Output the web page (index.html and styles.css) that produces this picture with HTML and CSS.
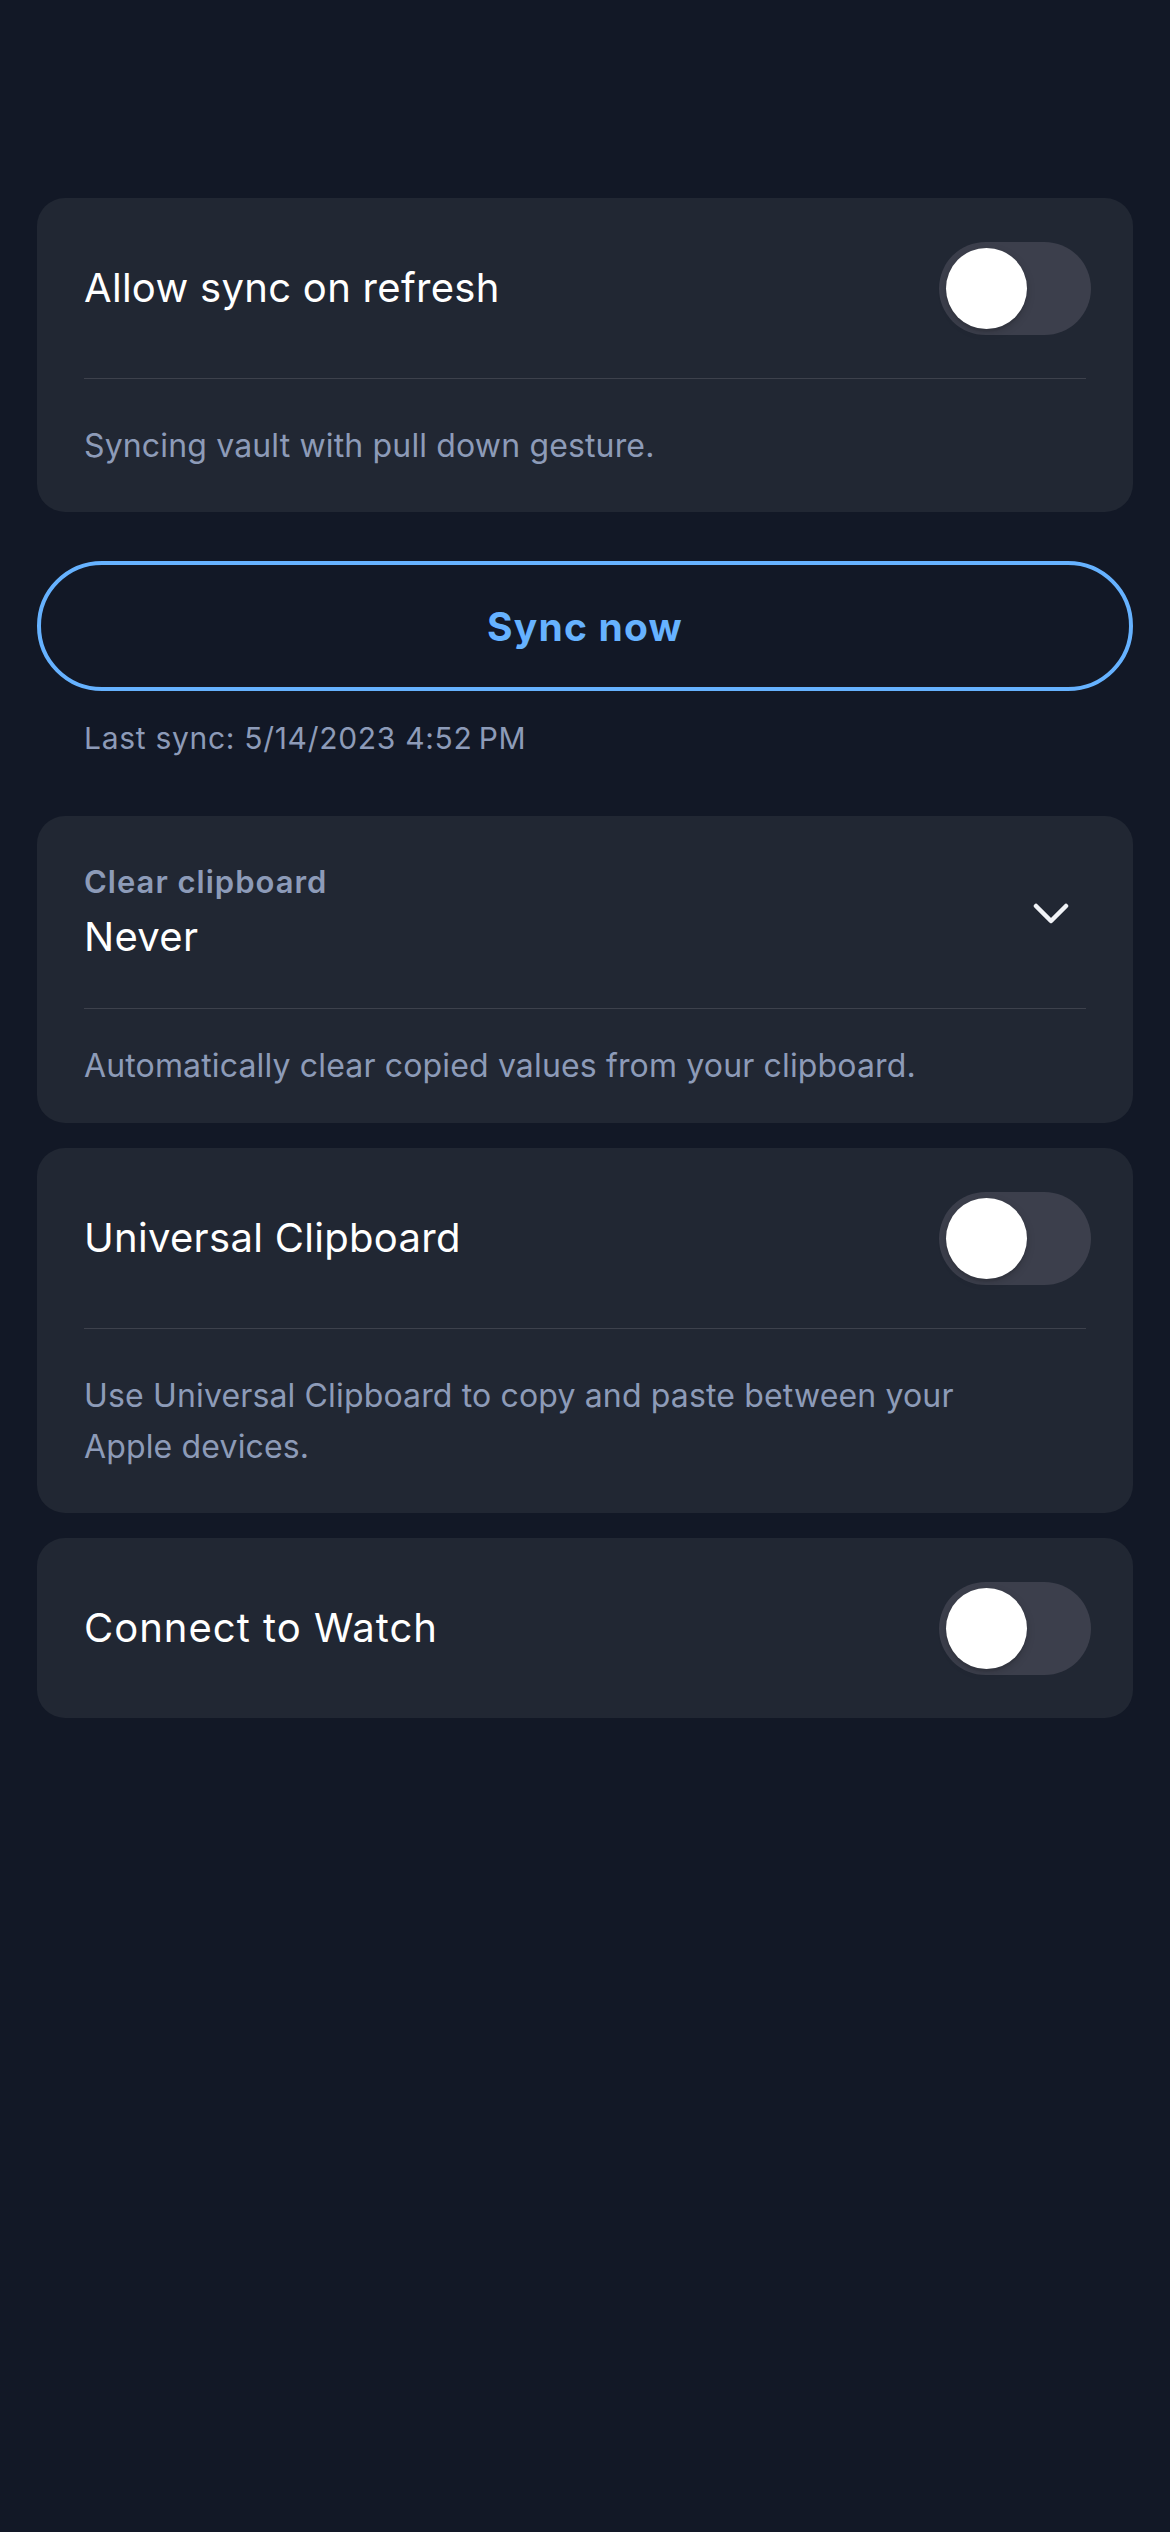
FILE: index.html
```html
<!DOCTYPE html>
<html lang="en">
<head>
<meta charset="utf-8">
<title>Settings</title>
<link rel="stylesheet" href="styles.css">
</head>
<body>
<main class="page">
  <section class="card">
    <div class="row">
      <span class="title">Allow sync on refresh</span>
      <span class="toggle"><span class="knob"></span></span>
    </div>
    <div class="divider"></div>
    <p class="desc">Syncing vault with pull down gesture.</p>
  </section>

  <button class="sync-btn">Sync now</button>
  <p class="last-sync">Last sync: 5/14/2023 4:52&#8239;PM</p>

  <section class="card card-clip">
    <div class="row row-picker">
      <div class="picker-text">
        <span class="picker-label">Clear clipboard</span>
        <span class="picker-value">Never</span>
      </div>
      <svg class="chevron" width="36" height="22" viewBox="0 0 36 22" aria-hidden="true">
        <polyline points="3,3 18,18 33,3" fill="none" stroke="#f1f3f7" stroke-width="4.5" stroke-linecap="round" stroke-linejoin="round"/>
      </svg>
    </div>
    <div class="divider"></div>
    <p class="desc desc-tight">Automatically clear copied values from your clipboard.</p>
  </section>

  <section class="card card-gap">
    <div class="row">
      <span class="title">Universal Clipboard</span>
      <span class="toggle"><span class="knob"></span></span>
    </div>
    <div class="divider"></div>
    <p class="desc desc-wrap">Use Universal Clipboard to copy and paste between your Apple devices.</p>
  </section>

  <section class="card card-gap">
    <div class="row">
      <span class="title title-wide">Connect to Watch</span>
      <span class="toggle"><span class="knob"></span></span>
    </div>
  </section>
</main>
</body>
</html>
```

FILE: styles.css
```css
* { box-sizing: border-box; }

html, body {
  margin: 0;
  padding: 0;
  background: #121826;
}

body {
  font-family: Inter, "Noto Sans", "Liberation Sans", sans-serif;
  color: #ffffff;
  min-height: 2532px;
}

.page {
  padding: 198px 37px 0 37px;
  display: flex;
  flex-direction: column;
}

.card {
  background: #212733;
  border-radius: 28px;
  display: flex;
  flex-direction: column;
}

.card-gap { margin-top: 25px; }

.row {
  height: 180px;
  display: flex;
  align-items: center;
  justify-content: space-between;
  padding: 0 42px 0 47px;
}

.title {
  font-size: 40px;
  line-height: 1.2;
  font-weight: 400;
  letter-spacing: 0.3px;
  color: #ffffff;
}

.title-wide { letter-spacing: 1px; }

.toggle {
  width: 152px;
  height: 93px;
  border-radius: 47px;
  background: #3c3f4c;
  padding: 6px 7px;
  display: flex;
  align-items: center;
  flex-shrink: 0;
}

.knob {
  width: 81px;
  height: 81px;
  border-radius: 50%;
  background: #ffffff;
  box-shadow: 0 3px 8px rgba(0, 0, 0, 0.18), 0 3px 1px rgba(0, 0, 0, 0.06);
}

.divider {
  height: 1px;
  margin: 0 47px;
  background: #3d414c;
}

.desc {
  margin: 0;
  padding: 41px 47px;
  font-size: 32px;
  line-height: 51px;
  color: #8d9bb8;
  letter-spacing: 0.15px;
}

.desc-tight { padding: 31px 47px 32px; }

.desc-wrap { padding-right: 150px; }

.sync-btn {
  margin: 49px 0 0;
  height: 130px;
  border: 4px solid #66b2ff;
  border-radius: 65px;
  background: transparent;
  color: #66b2ff;
  font-family: Inter, "Noto Sans", "Liberation Sans", sans-serif;
  font-size: 39px;
  font-weight: 700;
  letter-spacing: 1.2px;
}

.last-sync {
  margin: 27px 0 0;
  padding-left: 47px;
  font-size: 30px;
  line-height: 40px;
  color: #8d9bb8;
  letter-spacing: 0.7px;
}

.card-clip { margin-top: 58px; }

.row-picker {
  height: 192px;
  padding-right: 64px;
}

.picker-text {
  display: flex;
  flex-direction: column;
  padding-top: 2px;
}

.picker-label {
  font-size: 31px;
  line-height: 40px;
  font-weight: 600;
  color: #8d9bb8;
  letter-spacing: 1px;
}

.picker-value {
  margin-top: 8px;
  font-size: 40px;
  line-height: 54px;
  color: #ffffff;
  letter-spacing: 0.3px;
}

.chevron {
  display: block;
  margin-top: 4px;
}
```
